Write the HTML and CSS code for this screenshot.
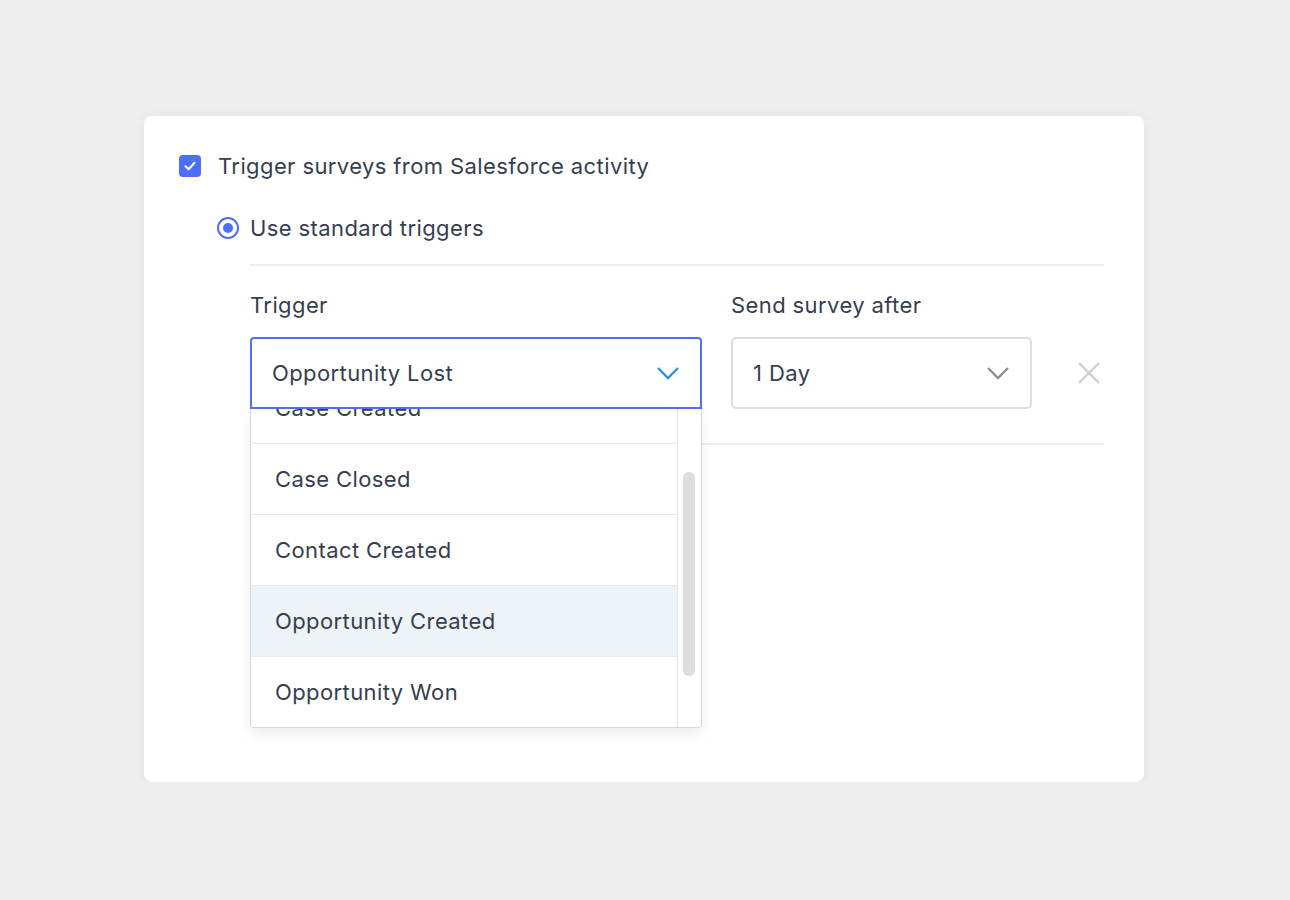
FILE: index.html
```html
<!DOCTYPE html>
<html lang="en">
<head>
    <meta charset="UTF-8">
    <title>Salesforce triggers</title>
    <link rel="stylesheet" href="styles.css">
</head>
<body>

    <div class="card">
        <label class="check-row">
            <span class="checkbox">
                <svg width="14" height="14" viewBox="0 0 14 14"><path d="M2.5 7.2 L5.6 10.2 L11.5 3.8" fill="none" stroke="#fff" stroke-width="2" stroke-linecap="round" stroke-linejoin="round"/></svg>
            </span>
            Trigger surveys from Salesforce activity
        </label>

        <label class="radio-row">
            <span class="radio"><span class="radio-dot"></span></span>
            Use standard triggers
        </label>

        <div class="trigger-section">
            <div class="trigger-row">
                <div class="field field-trigger">
                    <div class="field-label">Trigger</div>
                    <div class="select select-open">
                        <span>Opportunity Lost</span>
                        <svg class="chevron" width="24" height="14" viewBox="0 0 24 14"><path d="M2 2 L12 12 L22 2" fill="none" stroke="#2f8fe0" stroke-width="2.4"/></svg>
                    </div>
                    <div class="dropdown">
                        <div class="dropdown-list">
                            <div class="option">Case Created</div>
                            <div class="option">Case Closed</div>
                            <div class="option">Contact Created</div>
                            <div class="option option-hover">Opportunity Created</div>
                            <div class="option">Opportunity Won</div>
                        </div>
                        <div class="scroll-track"><div class="scroll-thumb"></div></div>
                    </div>
                </div>
                <div class="field field-delay">
                    <div class="field-label">Send survey after</div>
                    <div class="select">
                        <span>1 Day</span>
                        <svg class="chevron" width="24" height="14" viewBox="0 0 24 14"><path d="M2 2 L12 12 L22 2" fill="none" stroke="#8a8f98" stroke-width="2.4"/></svg>
                    </div>
                </div>
                <button class="remove-button">
                    <svg width="24" height="24" viewBox="0 0 24 24"><path d="M2 2 L22 22 M22 2 L2 22" stroke="#cfcfcf" stroke-width="2.4"/></svg>
                </button>
            </div>
        </div>
    </div>

</body>
</html>
```

FILE: styles.css
```css
body {
    font-family: Inter, "Noto Sans", sans-serif;
    margin: 0;
    padding: 116px 0 0 144px;
    background-color: #eeeeee;
    color: #353e50;
    letter-spacing: 0.4px;
}

.card {
    width: 1000px;
    height: 666px;
    box-sizing: border-box;
    background: #ffffff;
    border-radius: 8px;
    box-shadow: 0 2px 14px rgba(0, 0, 0, 0.06);
    padding: 35px 40px 0 35px;
}

.check-row {
    display: flex;
    align-items: center;
    gap: 17px;
    font-size: 22px;
    height: 30px;
}

.checkbox {
    width: 22px;
    height: 22px;
    border-radius: 4px;
    background: #4f6ef7;
    display: flex;
    align-items: center;
    justify-content: center;
}

.radio-row {
    display: flex;
    align-items: center;
    gap: 11px;
    font-size: 22px;
    height: 30px;
    margin: 32px 0 0 38px;
}

.radio {
    width: 22px;
    height: 22px;
    box-sizing: border-box;
    border: 2px solid #4f6ef7;
    border-radius: 50%;
    display: flex;
    align-items: center;
    justify-content: center;
}

.radio-dot {
    width: 10px;
    height: 10px;
    border-radius: 50%;
    background: #4f6ef7;
}

.trigger-section {
    margin: 21px 0 0 71px;
    border-top: 2px solid #eeeeee;
}

.trigger-row {
    display: flex;
    align-items: flex-end;
    gap: 29px;
    padding: 24px 0 34px;
    border-bottom: 2px solid #eeeeee;
}

.field {
    position: relative;
}

.field-trigger {
    width: 452px;
}

.field-delay {
    width: 301px;
}

.field-label {
    font-size: 22px;
    line-height: 30px;
    margin-bottom: 17px;
}

.select {
    height: 72px;
    box-sizing: border-box;
    border: 2px solid #dddddd;
    border-radius: 5px;
    display: flex;
    align-items: center;
    justify-content: space-between;
    padding: 0 20px 0 20px;
    font-size: 22px;
}

.select-open {
    border-color: #4f6ef7;
    border-radius: 4px 4px 0 0;
    position: relative;
    z-index: 2;
}

.remove-button {
    background: none;
    border: none;
    padding: 0;
    margin: 0 0 24px 16px;
    width: 24px;
    height: 24px;
    cursor: pointer;
}

.dropdown {
    position: absolute;
    top: 100%;
    left: 0;
    width: 452px;
    height: 319px;
    box-sizing: border-box;
    background: #ffffff;
    border: 1px solid #d8d8d8;
    border-top: none;
    border-radius: 0 0 4px 4px;
    box-shadow: 0 6px 14px rgba(0, 0, 0, 0.08);
    overflow: hidden;
    display: flex;
    z-index: 1;
}

.dropdown-list {
    flex-grow: 1;
    margin-top: -36px;
}

.option {
    height: 70px;
    border-bottom: 1px solid #e8e8e8;
    display: flex;
    align-items: center;
    padding-left: 24px;
    font-size: 22px;
}

.option-hover {
    background: #edf3f7;
}

.scroll-track {
    width: 24px;
    border-left: 1px solid #e8e8e8;
    padding-top: 63px;
    box-sizing: border-box;
}

.scroll-thumb {
    width: 12px;
    height: 204px;
    margin-left: 5px;
    border-radius: 6px;
    background: #dddddd;
}
```
